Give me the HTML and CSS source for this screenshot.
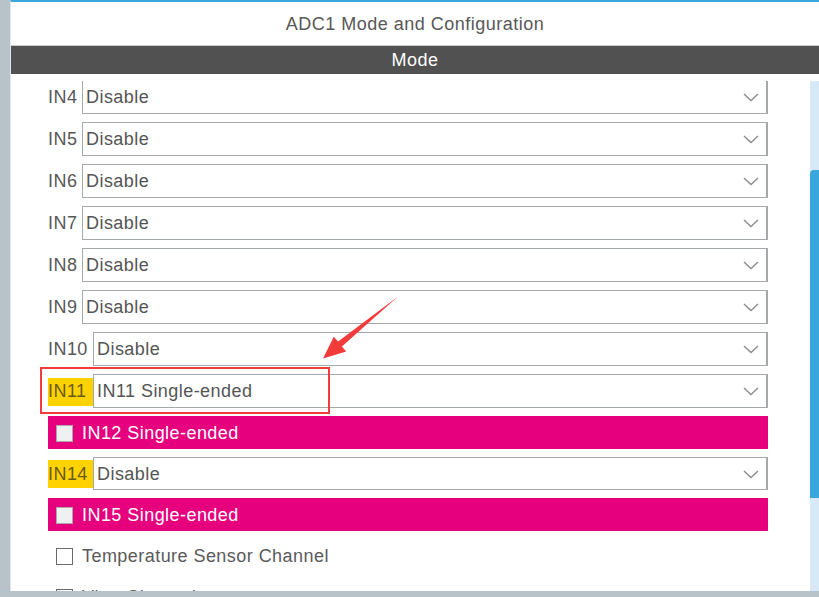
FILE: index.html
```html
<!DOCTYPE html>
<html>
<head>
<meta charset="utf-8">
<link rel="stylesheet" href="styles.css">
</head>
<body>
<div class="frame">
  <div class="panel">
    <div class="title">ADC1 Mode and Configuration</div>
    <div class="modebar">Mode</div>
    <div class="body">
      <div class="viewport">
        <div class="rows">
          <div class="row"><span class="lbl">IN4</span><div class="sel">Disable<svg class="chev" width="16" height="9" viewBox="0 0 16 9"><polyline points="1,1 8,7.5 15,1" fill="none" stroke="#8c8c8c" stroke-width="1.4"/></svg></div></div>
          <div class="row"><span class="lbl">IN5</span><div class="sel">Disable<svg class="chev" width="16" height="9" viewBox="0 0 16 9"><polyline points="1,1 8,7.5 15,1" fill="none" stroke="#8c8c8c" stroke-width="1.4"/></svg></div></div>
          <div class="row"><span class="lbl">IN6</span><div class="sel">Disable<svg class="chev" width="16" height="9" viewBox="0 0 16 9"><polyline points="1,1 8,7.5 15,1" fill="none" stroke="#8c8c8c" stroke-width="1.4"/></svg></div></div>
          <div class="row"><span class="lbl">IN7</span><div class="sel">Disable<svg class="chev" width="16" height="9" viewBox="0 0 16 9"><polyline points="1,1 8,7.5 15,1" fill="none" stroke="#8c8c8c" stroke-width="1.4"/></svg></div></div>
          <div class="row"><span class="lbl">IN8</span><div class="sel">Disable<svg class="chev" width="16" height="9" viewBox="0 0 16 9"><polyline points="1,1 8,7.5 15,1" fill="none" stroke="#8c8c8c" stroke-width="1.4"/></svg></div></div>
          <div class="row"><span class="lbl">IN9</span><div class="sel">Disable<svg class="chev" width="16" height="9" viewBox="0 0 16 9"><polyline points="1,1 8,7.5 15,1" fill="none" stroke="#8c8c8c" stroke-width="1.4"/></svg></div></div>
          <div class="row"><span class="lbl wide">IN10</span><div class="sel">Disable<svg class="chev" width="16" height="9" viewBox="0 0 16 9"><polyline points="1,1 8,7.5 15,1" fill="none" stroke="#8c8c8c" stroke-width="1.4"/></svg></div></div>
          <div class="row"><span class="lbl wide hl">IN11</span><div class="sel">IN11 Single-ended<svg class="chev" width="16" height="9" viewBox="0 0 16 9"><polyline points="1,1 8,7.5 15,1" fill="none" stroke="#8c8c8c" stroke-width="1.4"/></svg></div></div>
          <div class="row pink"><span class="box"></span>IN12 Single-ended</div>
          <div class="row short"><span class="lbl wide hl">IN14</span><div class="sel">Disable<svg class="chev" width="16" height="9" viewBox="0 0 16 9"><polyline points="1,1 8,7.5 15,1" fill="none" stroke="#8c8c8c" stroke-width="1.4"/></svg></div></div>
          <div class="row pink"><span class="box"></span>IN15 Single-ended</div>
          <div class="row plain"><span class="box empty"></span>Temperature Sensor Channel</div>
          <div class="row plain"><span class="box empty"></span>Vbat Channel</div>
        </div>
        <div class="redbox"></div>
        <svg class="arrow" width="819" height="597" viewBox="0 0 819 597">
          <polygon points="398,296.5 341.9,346.6 346.2,351.4 323,358.5 333.8,336.8 338.1,341.4" fill="#f23c3c"/>
        </svg>
      </div>
      <div class="scroll"><div class="thumb"></div></div>
    </div>
  </div>
</div>
</body>
</html>
```
FILE: styles.css
```css
* { box-sizing: border-box; }
html, body { margin: 0; padding: 0; }
body {
  width: 819px;
  height: 597px;
  overflow: hidden;
  background: #b8c3c9;
  font-family: "Liberation Sans", Arial, sans-serif;
  color: #575757;
}
.frame {
  height: 591px;
  padding-left: 10px;
}
.panel {
  height: 591px;
  background: #fff;
  border-top: 2px solid #3aa7dc;
  border-left: 1px solid #e4e8ea;
  display: flex;
  flex-direction: column;
}
.title {
  height: 44px;
  border-bottom: 1px solid #c9c9c9;
  display: flex;
  align-items: center;
  justify-content: center;
  font-size: 18px;
  letter-spacing: 0.5px;
  padding-top: 1px;
  color: #585858;
}
.modebar {
  height: 28px;
  background: #505150;
  color: #fff;
  display: flex;
  align-items: center;
  justify-content: center;
  font-size: 18px;
  letter-spacing: 0.5px;
  padding-top: 1px;
}
.body {
  flex: 1;
  display: flex;
  padding-top: 7px;
  min-height: 0;
}
.viewport {
  flex: 1;
  overflow: hidden;
  position: relative;
}
.rows {
  margin-top: -1px;
  padding-left: 37px;
  padding-right: 42px;
  display: flex;
  flex-direction: column;
  gap: 8px;
}
.row {
  height: 34px;
  display: flex;
  align-items: center;
  font-size: 18px;
  letter-spacing: 0.45px;
  flex-shrink: 0;
  padding-top: 1px;
}
.row.short { height: 33px; }
.lbl {
  width: 34px;
  flex-shrink: 0;
  display: flex;
  align-items: center;
  height: 28px;
  color: #575757;
}
.lbl.wide { width: 45px; }
.lbl.hl { background: #ffd200; color: #6a5a1a; }
.sel {
  flex: 1;
  height: calc(100% + 1px);
  margin-top: -1px;
  border: 1px solid #a4a9ac;
  border-right-width: 2px;
  display: flex;
  align-items: center;
  padding-left: 3px;
  padding-top: 1px;
  position: relative;
  color: #555;
}
.chev {
  position: absolute;
  right: 7px;
  top: 12px;
}
.pink {
  height: 33px;
  background: #e6007e;
  color: #fff;
  padding-left: 8px;
}
.box {
  width: 17px;
  height: 17px;
  border: 1px solid #a9a9a9;
  background: #eef0f2;
  margin-right: 9px;
  flex-shrink: 0;
}
.plain {
  height: 33px;
  padding-left: 8px;
  color: #5a5a5a;
}
.box.empty {
  background: #fff;
  border: 1.5px solid #6a6a6a;
}
.redbox {
  position: absolute;
  left: 29px;
  top: 286px;
  width: 290px;
  height: 47px;
  border: 2px solid #f03c3c;
}
.arrow {
  position: absolute;
  left: -11px;
  top: -81px;
}
.scroll {
  width: 9px;
  background: #d7e8f6;
  position: relative;
}
.thumb {
  margin-top: 89px;
  height: 328px;
  background: #3aa7dc;
  border-radius: 4px 0 0 0;
}
```
